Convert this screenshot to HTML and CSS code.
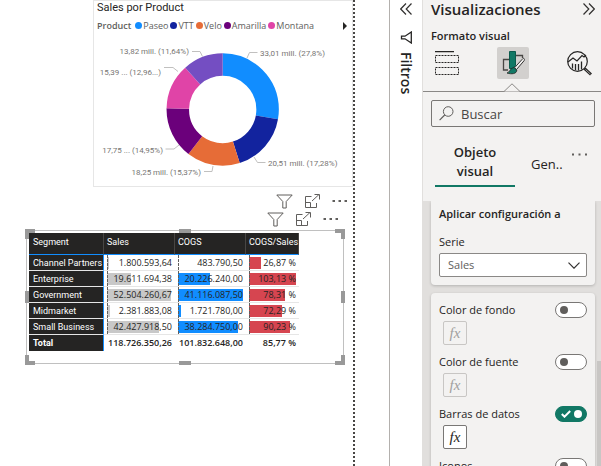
FILE: index.html
```html
<!DOCTYPE html>
<html lang="es">
<head>
<meta charset="utf-8">
<meta name="viewport" content="width=device-width, initial-scale=1">
<title>Visualizaciones</title>
<link rel="stylesheet" href="styles.css">
</head>
<body>
<main class="canvas">
  <div class="page">
    <section class="donut-card">
      <h2 class="chart-title">Sales por Product</h2>
      <div class="legend">
        <strong class="legend-title">Product</strong>
        <ul class="legend-list">
          <li class="legend-item paseo">Paseo</li>
          <li class="legend-item vtt">VTT</li>
          <li class="legend-item velo">Velo</li>
          <li class="legend-item amarilla">Amarilla</li>
          <li class="legend-item montana">Montana</li>
        </ul>
        <button class="legend-next" aria-label="Siguiente"><svg width="4" height="8" viewBox="0 0 4 8"><path d="M0 0l4 4-4 4z" fill="#252423"/></svg></button>
      </div>
      <svg class="donut" width="258" height="150" viewBox="94 36 258 150" role="img" aria-label="Sales por Product">
        <g fill="none" stroke-width="22.5" transform="rotate(-90 222.7 109.5)">
          <circle cx="222.7" cy="109.5" r="44.9" pathLength="100" stroke="#118dff" stroke-dasharray="27.8 72.2"/>
          <circle cx="222.7" cy="109.5" r="44.9" pathLength="100" stroke="#12239e" stroke-dasharray="17.28 82.72" stroke-dashoffset="-27.8"/>
          <circle cx="222.7" cy="109.5" r="44.9" pathLength="100" stroke="#e66c37" stroke-dasharray="15.37 84.63" stroke-dashoffset="-45.08"/>
          <circle cx="222.7" cy="109.5" r="44.9" pathLength="100" stroke="#6b007b" stroke-dasharray="14.95 85.05" stroke-dashoffset="-60.45"/>
          <circle cx="222.7" cy="109.5" r="44.9" pathLength="100" stroke="#e044a7" stroke-dasharray="12.96 87.04" stroke-dashoffset="-75.4"/>
          <circle cx="222.7" cy="109.5" r="44.9" pathLength="100" stroke="#744ec2" stroke-dasharray="11.64 88.36" stroke-dashoffset="-88.36"/>
        </g>
        <g fill="none" stroke="#c1c0bf">
          <path d="M247 58l2.500-5.500h8M192 51.500h8l2.500 5M164 67.500h9l5 4M165.500 149h8.500l5-4M204 171.500h8l1-5.500M254 157l3.500 5.500h8"/>
        </g>
        <g class="donut-labels">
          <text x="260" y="56">33,01 mill. (27,8%)</text>
          <text x="268" y="166">20,51 mill. (17,28%)</text>
          <text x="201" y="175" text-anchor="end">18,25 mill. (15,37%)</text>
          <text x="163" y="153" text-anchor="end">17,75 ... (14,95%)</text>
          <text x="161" y="75" text-anchor="end">15,39 ... (12,96...)</text>
          <text x="189" y="54" text-anchor="end">13,82 mill. (11,64%)</text>
        </g>
      </svg>
    </section>

    <svg class="symbols" aria-hidden="true">
      <symbol id="funnel" viewBox="0 0 17 15"><path d="M.8 1h15.400l-6 6.500v6.500H6.800V7.500z" fill="none" stroke="#605e5c"/></symbol>
      <symbol id="focus" viewBox="0 0 15 14"><path d="M6.500 2.500h-6v11h11V9M.5 8.500h5v5M7 7l7-6.500M9.500.5h5v5" fill="none" stroke="#605e5c"/></symbol>
      <symbol id="dots" viewBox="0 0 16 4"><path d="M.5 1h2.500v2H.5zM6.500 1H9v2H6.500zM12.500 1H15v2h-2.500z" fill="#605e5c"/></symbol>
    </svg>
    <div class="visual-header">
      <button aria-label="Filtros"><svg width="17" height="15"><use href="#funnel"/></svg></button>
      <button aria-label="Modo de enfoque"><svg width="15" height="14"><use href="#focus"/></svg></button>
      <button aria-label="Más opciones"><svg width="16" height="4"><use href="#dots"/></svg></button>
    </div>
    <div class="visual-header inner">
      <button aria-label="Filtros"><svg width="17" height="15"><use href="#funnel"/></svg></button>
      <button aria-label="Modo de enfoque"><svg width="15" height="14"><use href="#focus"/></svg></button>
      <button aria-label="Más opciones"><svg width="16" height="4"><use href="#dots"/></svg></button>
    </div>

    <section class="table-visual">
      <i class="handle tl"></i><i class="handle tc"></i><i class="handle tr"></i>
      <i class="handle ml"></i><i class="handle mr"></i>
      <i class="handle bl"></i><i class="handle bc"></i><i class="handle br"></i>
      <table class="matrix">
        <colgroup><col class="c-segment"><col class="c-sales"><col class="c-cogs"><col class="c-ratio"></colgroup>
        <thead><tr><th>Segment</th><th>Sales</th><th>COGS</th><th>COGS/Sales</th></tr></thead>
        <tbody>
          <tr><th>Channel Partners</th><td class="sales" style="--bar:2px">1.800.593,64</td><td class="cogs" style="--bar:0px">483.790,50</td><td class="ratio" style="--bar:12px">26,87 %</td></tr>
          <tr><th>Enterprise</th><td class="sales" style="--bar:24px">19.611.694,38</td><td class="cogs" style="--bar:32px">20.226.240,00</td><td class="ratio" style="--bar:47px">103,13 %</td></tr>
          <tr><th>Government</th><td class="sales" style="--bar:64px">52.504.260,67</td><td class="cogs" style="--bar:65px">41.116.087,50</td><td class="ratio" style="--bar:36px">78,31 %</td></tr>
          <tr><th>Midmarket</th><td class="sales" style="--bar:3px">2.381.883,08</td><td class="cogs" style="--bar:3px">1.721.780,00</td><td class="ratio" style="--bar:33px">72,29 %</td></tr>
          <tr><th>Small Business</th><td class="sales" style="--bar:52px">42.427.918,50</td><td class="cogs" style="--bar:60px">38.284.750,00</td><td class="ratio" style="--bar:41px">90,23 %</td></tr>
        </tbody>
        <tfoot><tr><th>Total</th><td>118.726.350,26</td><td>101.832.648,00</td><td>85,77 %</td></tr></tfoot>
      </table>
    </section>
  </div>
</main>

<aside class="filters">
  <button aria-label="Expandir filtros"><svg width="12" height="12" viewBox="0 0 12 12"><path d="M6 .5L.7 6 6 11.500M11.500.5L6.200 6l5.300 5.500" fill="none" stroke="#323130" stroke-width="1.200"/></svg></button>
  <svg class="filters-icon" width="12" height="13" viewBox="0 0 12 13"><path d="M11.300 1v11L5 7.800H1.500V5.200H5z" fill="none" stroke="#252423" stroke-width="1.300"/></svg>
  <h2 class="filters-title">Filtros</h2>
</aside>

<aside class="panel">
  <header class="panel-head">
    <h1 class="panel-title">Visualizaciones</h1>
    <button aria-label="Contraer"><svg width="12" height="12" viewBox="0 0 12 12"><path d="M.5.5L5.800 6 .5 11.500M6 .5L11.300 6 6 11.500" fill="none" stroke="#323130" stroke-width="1.200"/></svg></button>
  </header>
  <h2 class="panel-sub">Formato visual</h2>
  <nav class="modes">
    <button class="mode" aria-label="Campos"><svg width="24" height="24" viewBox="0 0 24 24"><path d="M0 .6h19" stroke="#252423" stroke-width="1.300"/><path d="M.5 4.500h23v7H.5zM.5 16.500h23v7H.5z" fill="none" stroke="#252423" stroke-dasharray="2 1"/></svg></button>
    <button class="mode active" aria-label="Formato visual"><svg width="24" height="26" viewBox="0 0 24 26">
      <path d="M8 9.500H2.500V20H7M15 5.500h6.500V8" fill="none" stroke="#484644" stroke-width="1.300"/>
      <path d="M8.500 1.500h6v14l-3 3h-3z" fill="#117865" stroke="#0b5a4c"/>
      <path d="M23 8.500c.7.600.500 1.500 0 2.300L15.500 19.500l-2-1.700 7.700-8.500c.8-.9 1.300-1.200 1.800-.8z" fill="#f3f2f1" stroke="#323130"/>
      <path d="M12.800 17.500l3 2.500c.2 4-5.500 4.500-9.800 3 3-.5 3-5 6.800-5.500z" fill="#117865" stroke="#252423" stroke-width=".8"/></svg></button>
    <button class="mode" aria-label="Análisis"><svg width="25" height="25" viewBox="0 0 25 25"><g fill="none" stroke="#252423" stroke-width="1.200"><circle cx="10.500" cy="10.500" r="9.800"/><path d="M1 11l5-4 4 3 5-5.500 2 1.500 2-2"/><path d="M5.500 12.500v5M8.500 13v6M11.500 13v6.500M14.500 10.500v8" stroke-width="1.300"/></g><path d="M17.500 17.500l6.500 6" stroke="#252423" stroke-width="3"/><path d="M18.500 18.500l5 4.600" stroke="#a19f9d"/></svg></button>
  </nav>
  <div class="divider"><svg width="18" height="9" viewBox="0 0 18 9"><path d="M0 8.500h1L9 .8l8 7.700h1" fill="#f3f2f1" stroke="#8a8886"/></svg></div>
  <label class="search">
    <svg width="15" height="15" viewBox="0 0 15 15"><g fill="none" stroke="#605e5c"><circle cx="9.200" cy="5.500" r="4.800"/><path d="M5.700 9L.6 14.200" stroke-width="1.200"/></g></svg>
    <input type="text" placeholder="Buscar" aria-label="Buscar">
  </label>
  <div class="tabs">
    <button class="tab selected">Objeto visual</button>
    <button class="tab general">Gen..</button>
    <button class="more" aria-label="Más opciones"><svg width="15" height="3" viewBox="0 0 15 3"><path d="M0 .5h2v2H0zM6.500.5h2v2h-2zM13 .5h2v2h-2z" fill="#605e5c"/></svg></button>
  </div>
  <div class="scroll">
    <section class="card top">
      <h3 class="card-title">Aplicar configuración a</h3>
      <label class="label" for="serie">Serie</label>
      <div class="select-wrap">
        <select id="serie"><option>Sales</option></select>
        <svg width="12" height="7" viewBox="0 0 12 7"><path d="M.5.7L6 6.200 11.500.7" fill="none" stroke="#323130" stroke-width="1.200"/></svg>
      </div>
    </section>
    <section class="card">
      <div class="option">
        <label class="label" for="fondo">Color de fondo</label>
        <input class="toggle" type="checkbox" id="fondo">
        <button class="fx" disabled>fx</button>
      </div>
      <div class="option">
        <label class="label" for="fuente">Color de fuente</label>
        <input class="toggle" type="checkbox" id="fuente">
        <button class="fx" disabled>fx</button>
      </div>
      <div class="option">
        <label class="label" for="barras">Barras de datos</label>
        <span class="toggle-wrap"><input class="toggle" type="checkbox" id="barras" checked><svg width="10" height="8" viewBox="0 0 10 8"><path d="M.8 4l2.700 2.700L9.200 1" fill="none" stroke="#fff" stroke-width="2"/></svg></span>
        <button class="fx">fx</button>
      </div>
      <div class="option">
        <label class="label" for="iconos">Iconos</label>
        <input class="toggle" type="checkbox" id="iconos">
        <button class="fx" disabled>fx</button>
      </div>
    </section>
    <i class="thumb"></i>
  </div>
</aside>
</body>
</html>
```
FILE: styles.css
```css
* { box-sizing: border-box; }

body {
  margin: 0;
  height: 100vh;
  display: flex;
  overflow: hidden;
  background: #fff;
  color: #252423;
  font-family: "Open Sans", "Noto Sans", sans-serif;
  font-size: 12px;
}

h1, h2, h3, ul { margin: 0; padding: 0; font-weight: 600; }

button {
  padding: 0;
  border: 0;
  background: none;
  color: inherit;
  font: inherit;
}

svg { display: block; flex: none; }
.symbols { position: absolute; width: 0; height: 0; }

/* Report canvas */
.canvas { flex: 1; min-width: 0; padding-right: 34px; }

.page {
  height: 100%;
  border-right: 2px dotted #484644;
}

.donut-card {
  margin-left: 93px;
  height: 187px;
  border: 1px solid #e6e6e6;
}

.chart-title {
  padding-left: 3px;
  font: 400 11px/14px Roboto, sans-serif;
}

.legend {
  display: flex;
  align-items: center;
  height: 21px;
  padding: 0 5px 0 3px;
  color: #605e5c;
  font-size: 9px;
}

.legend-title { font-weight: 600; }

.legend-list {
  flex: 1;
  display: flex;
  gap: 2px;
  margin-left: 4px;
  list-style: none;
  font-weight: 400;
}

.legend-item { display: flex; align-items: center; gap: 1px; }

.legend-item::before {
  content: "";
  width: 7px;
  height: 7px;
  border-radius: 50%;
  background: var(--dot);
}

.paseo { --dot: #118dff; }
.vtt { --dot: #12239e; }
.velo { --dot: #e66c37; }
.amarilla { --dot: #6b007b; }
.montana { --dot: #e044a7; }

.donut { width: 100%; }
.donut-labels { fill: #777573; font: 8px Roboto, sans-serif; }

.visual-header {
  display: flex;
  justify-content: flex-end;
  align-items: center;
  gap: 12px;
  height: 18px;
  margin-top: 5px;
  padding-right: 5px;
}

.visual-header.inner { margin-top: 0; padding-right: 14px; }

.table-visual {
  position: relative;
  margin: 2px 9px 0 26px;
  padding: 2px 0 12px 2px;
  border: 1px solid #c0c0c0;
}

.handle { position: absolute; border: 0 solid #999; }
.tl, .tr, .bl, .br { width: 10px; height: 10px; }
.tl { top: -2px; left: -2px; border-width: 4px 0 0 4px; }
.tr { top: -2px; right: -2px; border-width: 4px 4px 0 0; }
.bl { bottom: -2px; left: -2px; border-width: 0 0 4px 4px; }
.br { bottom: -2px; right: -2px; border-width: 0 4px 4px 0; }
.tc, .bc { left: calc(50% - 6px); width: 12px; border-width: 4px 0 0; }
.tc { top: -2px; }
.bc { bottom: -2px; }
.ml, .mr { top: calc(50% - 6px); height: 12px; border-width: 0 0 0 4px; }
.ml { left: -2px; }
.mr { right: -2px; }

.matrix {
  position: relative;
  table-layout: fixed;
  width: 270px;
  border-collapse: separate;
  border-spacing: 0;
  font-size: 9px;
  line-height: 12px;
}

.c-segment { width: 75px; }
.c-sales { width: 71px; }
.c-cogs { width: 71px; }
.c-ratio { width: 53px; }

.matrix th {
  padding: 0 4px;
  background: #252423;
  color: #fff;
  font-family: Roboto, sans-serif;
  text-align: left;
  font-weight: 400;
  white-space: nowrap;
}

.matrix thead th {
  height: 22px;
  padding: 0 3px 4px;
  border-bottom: 1px solid #118dff;
  border-right: 1px solid #484644;
}

.matrix thead th:first-child { padding-left: 4px; }

.matrix tbody th, .matrix tfoot th {
  border-right: 1px solid #118dff;
  border-bottom: 1px solid #e6e6e6;
}

.matrix td {
  height: 16px;
  padding: 0 3px;
  border-bottom: 1px solid #e6e6e6;
  text-align: right;
  white-space: nowrap;
}

.matrix tbody td {
  background:
    repeating-linear-gradient(#605e5c 0 3px, transparent 3px 4px) 3px 0 / 1px 100% no-repeat,
    linear-gradient(var(--fill), var(--fill)) 3px 2px / var(--bar) 12px no-repeat;
}

.sales { --fill: #c8c8c8; }
.cogs { --fill: #118dff; }
.ratio { --fill: #d64550; }

.matrix tfoot td, .matrix tfoot th { border-bottom: 0; font-weight: 700; }
.matrix tfoot td { font-weight: 600; }

/* Collapsed filter pane */
.filters {
  display: flex;
  flex-direction: column;
  align-items: center;
  width: 33px;
  padding-top: 3px;
  border-left: 1px solid #b3b0ad;
}

.filters-icon { margin-top: 16px; }

.filters-title {
  margin-top: 8px;
  writing-mode: vertical-rl;
  font-size: 14px;
  line-height: 18px;
}

/* Visualizations pane */
.panel {
  display: flex;
  flex-direction: column;
  width: 179px;
  border-left: 1px solid #e1dfdd;
  background: #f3f2f1;
}

.panel-head {
  display: flex;
  justify-content: space-between;
  align-items: center;
  height: 18px;
  padding: 0 6px 0 8px;
}

.panel-title { font-size: 15px; line-height: 18px; }

.panel-sub {
  margin-top: 10px;
  padding-left: 8px;
  font-size: 11px;
  line-height: 16px;
}

.modes {
  display: flex;
  justify-content: space-between;
  margin-top: 3px;
  padding: 0 6px 0 8px;
}

.mode {
  display: flex;
  align-items: center;
  justify-content: center;
  width: 32px;
  height: 32px;
  border-radius: 2px;
}

.mode.active { background: #d2d0ce; }

.divider {
  display: flex;
  justify-content: center;
  height: 9px;
  margin-top: 4px;
  background: linear-gradient(#8a8886, #8a8886) 0 8px / 100% 1px no-repeat;
}

.search {
  display: flex;
  align-items: center;
  gap: 7px;
  height: 27px;
  margin: 8px 6px 0 8px;
  padding-left: 7px;
  border: 1px solid #797775;
  border-radius: 2px;
}

.search input {
  flex: 1;
  min-width: 0;
  padding: 0;
  border: 0;
  background: none;
  font: 13px/18px "Open Sans", sans-serif;
}

.search input::placeholder { color: #484644; opacity: 1; }

.tabs {
  display: flex;
  align-items: center;
  height: 74px;
  padding: 0 14px 0 12px;
  font-size: 13px;
  line-height: 19px;
}

.selected {
  width: 80px;
  height: 46px;
  padding: 0 12px 3px;
  border-bottom: 2px solid #117865;
  font-weight: 600;
}

.general { margin-left: 16px; }
.more { margin: 0 0 20px auto; }

.scroll {
  position: relative;
  flex: 1;
  min-height: 0;
  padding: 0 6px 0 8px;
  overflow: hidden;
  background: #e1dfdd;
}

.card {
  margin-bottom: 8px;
  padding: 8px;
  border-radius: 4px;
  background: #f3f2f1;
  box-shadow: 0 1px 3px #0003;
}

.card.top { padding-top: 4px; border-radius: 0 0 4px 4px; }
.card-title { margin-bottom: 10px; font-size: 11px; line-height: 18px; }
.label { font-size: 11px; line-height: 18px; }
.card.top .label { display: block; }

.select-wrap { display: flex; align-items: center; margin-top: 2px; }

.select-wrap select {
  appearance: none;
  width: 100%;
  height: 24px;
  padding: 0 8px;
  border: 1px solid #8a8886;
  border-radius: 2px;
  background: #fff;
  color: #605e5c;
  font: 11px/18px "Open Sans", sans-serif;
}

.select-wrap svg { margin-left: -19px; margin-right: 7px; pointer-events: none; }

.option {
  display: grid;
  grid-template-columns: 1fr 32px;
  grid-template-rows: 18px 24px;
  row-gap: 2px;
  align-items: center;
  margin-bottom: 8px;
}

.toggle-wrap { display: grid; align-items: center; }
.toggle-wrap > * { grid-area: 1 / 1; }
.toggle-wrap svg { z-index: 1; margin-left: 6px; }

.toggle {
  appearance: none;
  display: flex;
  align-items: center;
  width: 32px;
  height: 16px;
  margin: 0;
  padding: 0 4px;
  border: 1px solid #797775;
  border-radius: 8px;
  background: #fff;
}

.toggle::before {
  content: "";
  width: 8px;
  height: 8px;
  border-radius: 50%;
  background: #605e5c;
}

.toggle:checked { justify-content: flex-end; border-color: #117865; background: #117865; }
.toggle:checked::before { background: #fff; }

.fx {
  width: 24px;
  height: 24px;
  margin-left: 4px;
  border: 1px solid #797775;
  border-radius: 2px;
  background: #fff;
  font: italic 15px/20px "Liberation Serif", serif;
}

.fx:disabled { border-color: #c8c6c4; background: none; color: #a19f9d; }

.thumb {
  position: absolute;
  top: 160px;
  right: 0;
  bottom: 0;
  width: 4px;
  background: #c8c6c4;
}
```
